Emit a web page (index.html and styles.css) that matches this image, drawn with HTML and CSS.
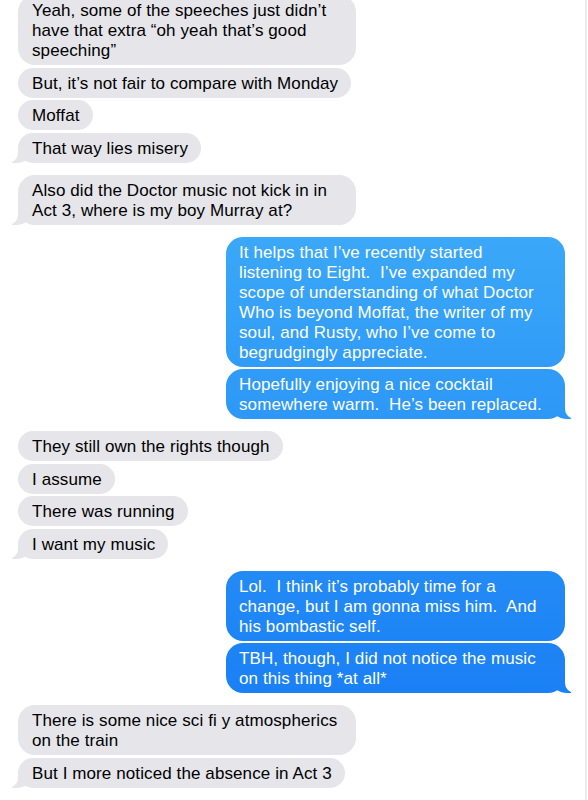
FILE: index.html
```html
<!DOCTYPE html>
<html lang="en">
<head>
  <meta charset="UTF-8">
  <title>Messages</title>
  <link rel="stylesheet" href="styles.css">
</head>
<body>
  <div class="screen">
    <div class="thread">

      <div class="group in">
        <div class="bubble wide">Yeah, some of the speeches just didn’t<br>have that extra “oh yeah that’s good<br>speeching”</div>
        <div class="bubble">But, it’s not fair to compare with Monday</div>
        <div class="bubble">Moffat</div>
        <div class="bubble tail">That way lies misery</div>
      </div>

      <div class="group in">
        <div class="bubble wide tail">Also did the Doctor music not kick in in<br>Act 3, where is my boy Murray at?</div>
      </div>

      <div class="group out">
        <div class="bubble wide">It helps that I’ve recently started<br>listening to Eight.&nbsp; I’ve expanded my<br>scope of understanding of what Doctor<br>Who is beyond Moffat, the writer of my<br>soul, and Rusty, who I’ve come to<br>begrudgingly appreciate.</div>
        <div class="bubble wide tail">Hopefully enjoying a nice cocktail<br>somewhere warm.&nbsp; He’s been replaced.</div>
      </div>

      <div class="group in">
        <div class="bubble">They still own the rights though</div>
        <div class="bubble">I assume</div>
        <div class="bubble">There was running</div>
        <div class="bubble tail">I want my music</div>
      </div>

      <div class="group out">
        <div class="bubble wide">Lol.&nbsp; I think it’s probably time for a<br>change, but I am gonna miss him.&nbsp; And<br>his bombastic self.</div>
        <div class="bubble wide tail">TBH, though, I did not notice the music<br>on this thing *at all*</div>
      </div>

      <div class="group in">
        <div class="bubble wide">There is some nice sci fi y atmospherics<br>on the train</div>
        <div class="bubble tail">But I more noticed the absence in Act 3</div>
      </div>

    </div>
  </div>
</body>
</html>
```

FILE: styles.css
```css
body {
  margin: 0;
  background: #fff;
  font-family: "Liberation Sans", Arial, sans-serif;
  font-size: 17px;
  letter-spacing: 0.1px;
  color: #000;
  overflow: hidden;
}

.screen {
  width: 585px;
  height: 800px;
  border-right: 2px solid #ececec;
  overflow: hidden;
}

.thread {
  display: flex;
  flex-direction: column;
  gap: 12px;
  margin-top: -5px;
  padding: 0 20px 0 18px;
}

.group {
  display: flex;
  flex-direction: column;
  gap: 2.5px;
}

.group.in {
  align-items: flex-start;
}

.group.out {
  align-items: flex-end;
}

.bubble {
  position: relative;
  box-sizing: border-box;
  padding: 6px 13px 4px 14px;
  line-height: 20px;
  border-radius: 17px;
  white-space: nowrap;
}

.bubble.wide {
  width: 338px;
}

.out .bubble.wide {
  width: 339px;
  padding-left: 13px;
}

.in .bubble {
  background: #e5e5ea;
  color: #000;
}

.out .bubble {
  background: linear-gradient(to bottom, #5ec0f9 0%, #3aa7f8 30%, #1b81f5 85%, #1477f5 100%) fixed;
  color: #fff;
}

/* little tail on the last bubble of a group */
.bubble.tail::before,
.bubble.tail::after {
  content: "";
  position: absolute;
  bottom: 0;
  height: 18px;
}

.in .bubble.tail::before {
  left: -6px;
  width: 20px;
  background: #e5e5ea;
  border-bottom-right-radius: 16px 14px;
}

.in .bubble.tail::after {
  left: -10px;
  width: 10px;
  background: #fff;
  border-bottom-right-radius: 10px;
}

.out .bubble.tail::before {
  right: -6px;
  width: 20px;
  background: linear-gradient(to bottom, #5ec0f9 0%, #3aa7f8 30%, #1b81f5 85%, #1477f5 100%) fixed;
  border-bottom-left-radius: 16px 14px;
}

.out .bubble.tail::after {
  right: -10px;
  width: 10px;
  background: #fff;
  border-bottom-left-radius: 10px;
}
```
